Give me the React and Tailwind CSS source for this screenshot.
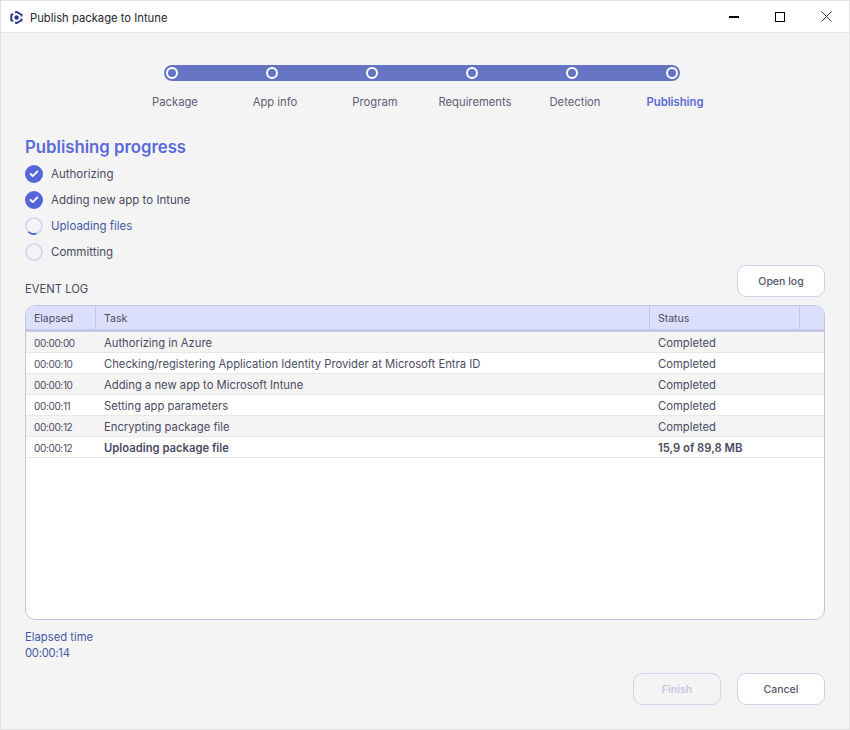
import { Check } from "lucide-react";

const steps = ["Package", "App info", "Program", "Requirements", "Detection", "Publishing"];

const logRows = [
  ["00:00:00", "Authorizing in Azure", "Completed"],
  ["00:00:10", "Checking/registering Application Identity Provider at Microsoft Entra ID", "Completed"],
  ["00:00:10", "Adding a new app to Microsoft Intune", "Completed"],
  ["00:00:11", "Setting app parameters", "Completed"],
  ["00:00:12", "Encrypting package file", "Completed"],
  ["00:00:12", "Uploading package file", "15,9 of 89,8 MB"],
];

export default function App() {
  return (
    <div className="w-[850px] h-[730px] flex flex-col bg-[#f4f4f4] border border-[#e2e2e2] overflow-hidden font-['Inter',sans-serif] text-[11.25px] text-[#4b4b63]">
      <TitleBar />
      <Stepper />
      <div className="flex flex-col flex-1 px-6">
        <Progress />
        <EventLog />
        <div className="mt-[9px] text-[#3f5aa6] leading-4">
          <p>Elapsed time</p>
          <p className="tracking-[-0.25px]">00:00:14</p>
        </div>
        <div className="flex justify-end gap-4 mt-3">
          <button className="w-[88px] h-[32px] pt-[1px] rounded-[9px] border border-[#d3d4ea] text-[10.5px] font-semibold text-[#c5c7e2]">
            Finish
          </button>
          <AppButton label="Cancel" />
        </div>
      </div>
    </div>
  );
}

function TitleBar() {
  return (
    <div className="h-[32px] shrink-0 flex items-center bg-white border-b border-[#e5e5e5] text-[#26262e]">
      <svg className="ml-[9px] mt-[1px] w-[13px] h-[13px]" viewBox="0 0 13 13" fill="none" stroke="#27348b" strokeWidth="1.9">
        <path d="M3.2 2.9 1.3 4V9.1L3.2 10.2" />
        <path d="M5 1.6 6.5 .9l5 2.8V5.6" />
        <path d="M11.5 7.4V9.3L6.5 12.1 5 11.4" />
        <circle cx="6.6" cy="6.5" r="2.2" fill="#27348b" stroke="none" />
      </svg>
      <span className="ml-[7px] pt-[3px]">Publish package to Intune</span>
      <div className="ml-auto flex items-center">
        <div className="w-[46px] flex justify-center">
          <div className="w-[10px] h-[2px] bg-black" />
        </div>
        <div className="w-[46px] flex justify-center">
          <div className="w-[10px] h-[10px] border border-black" />
        </div>
        <div className="w-[46px] flex justify-center">
          <svg className="w-[11px] h-[11px]" viewBox="0 0 11 11" stroke="#333" strokeWidth="1">
            <path d="M.5.5l10 10M10.5.5l-10 10" />
          </svg>
        </div>
      </div>
    </div>
  );
}

function Stepper() {
  return (
    <div className="flex flex-col items-center shrink-0 pt-[32px]">
      <div className="w-[516px] h-[16px] mr-[6px] px-[2px] flex items-center justify-between rounded-full bg-[#6674c4]">
        {steps.map((s) => (
          <div key={s} className="w-[12px] h-[12px] rounded-full border-2 border-white" />
        ))}
      </div>
      <div className="grid grid-cols-6 w-[600px] mt-[13px] leading-4 text-center text-[#5e5e74]">
        {steps.map((s) => (
          <span key={s} className={s === "Publishing" ? "font-semibold text-[#5b6ad6]" : ""}>
            {s}
          </span>
        ))}
      </div>
    </div>
  );
}

function Progress() {
  return (
    <div className="mt-[25px]">
      <h1 className="text-[16.75px] leading-6 font-semibold text-[#5b6ad8]">Publishing progress</h1>
      <div className="flex flex-col gap-2 mt-[6px]">
        <ProgressRow label="Authorizing" state="done" />
        <ProgressRow label="Adding new app to Intune" state="done" />
        <ProgressRow label="Uploading files" state="active" />
        <ProgressRow label="Committing" state="idle" />
      </div>
    </div>
  );
}

function ProgressRow({ label, state }) {
  return (
    <div className="flex items-center gap-2 h-[18px]">
      {state === "done" ? (
        <div className="w-[18px] h-[18px] rounded-full bg-[#5566d6] flex items-center justify-center">
          <Check size={10} color="white" strokeWidth={4.5} />
        </div>
      ) : (
        <svg className="w-[18px] h-[18px]" viewBox="0 0 18 18" fill="none">
          <circle cx="9" cy="9" r="8" stroke="#ccd7f2" strokeWidth="1.6" />
          {state === "active" && <path d="M3.3 14.7A8 8 0 0 0 11.5 16.6" stroke="#4a60c4" strokeWidth="1.6" />}
        </svg>
      )}
      <span className={`text-[11.5px] pt-[2px] ${state === "active" ? "text-[#3f5aa6]" : ""}`}>{label}</span>
    </div>
  );
}

function AppButton({ label }) {
  return (
    <button className="w-[88px] h-[32px] pt-[1px] rounded-[9px] border border-[#cfd0e6] bg-white text-[10.5px] font-medium text-[#55556c]">
      {label}
    </button>
  );
}

function EventLog() {
  return (
    <div className="mt-[4px]">
      <div className="flex items-end justify-between">
        <span className="leading-4">EVENT LOG</span>
        <AppButton label="Open log" />
      </div>
      <div className="mt-[8px] h-[315px] rounded-[10px] border border-[#c3c5e0] bg-white overflow-hidden">
        <div className="flex h-[26px] bg-[#dcdffb] border-b-[3px] border-[#c5c8e4] text-[10.5px] text-[#4b4b63]">
          <div className="w-[70px] pl-2 pt-[2px] flex items-center border-r border-[#c5c8e4]">Elapsed</div>
          <div className="w-[554px] pl-2 pt-[2px] flex items-center border-r border-[#c5c8e4]">Task</div>
          <div className="w-[150px] pl-2 pt-[2px] flex items-center border-r border-[#c5c8e4]">Status</div>
        </div>
        {logRows.map((r, idx) => {
          const last = idx === logRows.length - 1;
          return (
            <div
              key={idx}
              className={`flex items-center h-[21px] pt-[3px] border-b border-[#e8e8ec] ${idx % 2 === 0 && !last ? "bg-[#f4f4f4]" : "bg-white"}`}
            >
              <span className="w-[70px] pl-2 text-[10px] tracking-[-0.35px]">{r[0]}</span>
              <span className={`w-[554px] pl-2 ${last ? "font-semibold" : ""}`}>{r[1]}</span>
              <span className={`pl-2 ${last ? "font-semibold" : ""}`}>{r[2]}</span>
            </div>
          );
        })}
      </div>
    </div>
  );
}
